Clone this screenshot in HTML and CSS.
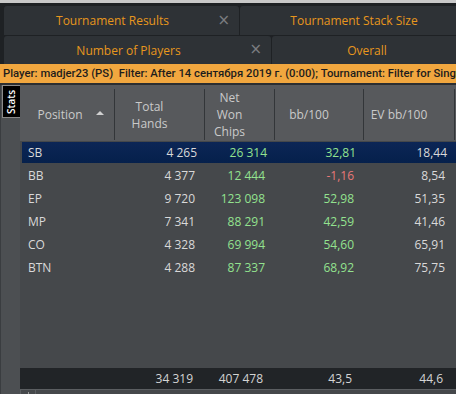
FILE: index.html
```html
<!DOCTYPE html>
<html>
<head>
<meta charset="utf-8">
<link rel="stylesheet" href="styles.css">
</head>
<body>
<div class="topstrip"></div>
<div class="tabbar">
  <div class="tabrow row-1">
    <div class="tab tab-a"><span class="tab-label">Tournament Results</span><span class="close">×</span></div>
    <div class="tab tab-b"><span class="tab-label">Tournament Stack Size</span></div>
  </div>
  <div class="tabrow row-2">
    <div class="tab tab-c"><span class="tab-label">Number of Players</span><span class="close">×</span></div>
    <div class="tab tab-d"><span class="tab-label">Overall</span></div>
  </div>
</div>
<div class="filterbar">Player: madjer23 (PS)&nbsp;&nbsp;Filter: After 14 сентября 2019 г. (0:00); Tournament: Filter for Singl</div>
<div class="main">
  <div class="side"><div class="stats"><span>Stats</span></div></div>
  <div class="table">
    <div class="head">
      <div class="hc hc-pos"><span>Position</span><span class="arrow"></span></div>
      <div class="hc">Total<br>Hands</div>
      <div class="hc">Net<br>Won<br>Chips</div>
      <div class="hc">bb/100</div>
      <div class="hc">EV bb/100</div>
      <div class="hc hc-last"></div>
    </div>
    <div class="body">
      <div class="row sel"><div class="c pos">SB</div><div class="c">4 265</div><div class="c g">26 314</div><div class="c g">32,81</div><div class="c">18,44</div><div></div></div>
      <div class="row"><div class="c pos">BB</div><div class="c">4 377</div><div class="c g">12 444</div><div class="c r">-1,16</div><div class="c">8,54</div><div></div></div>
      <div class="row"><div class="c pos">EP</div><div class="c">9 720</div><div class="c g">123 098</div><div class="c g">52,98</div><div class="c">51,35</div><div></div></div>
      <div class="row"><div class="c pos">MP</div><div class="c">7 341</div><div class="c g">88 291</div><div class="c g">42,59</div><div class="c">41,46</div><div></div></div>
      <div class="row"><div class="c pos">CO</div><div class="c">4 328</div><div class="c g">69 994</div><div class="c g">54,60</div><div class="c">65,91</div><div></div></div>
      <div class="row"><div class="c pos">BTN</div><div class="c">4 288</div><div class="c g">87 337</div><div class="c g">68,92</div><div class="c">75,75</div><div></div></div>
    </div>
    <div class="foot"><div class="f"></div><div class="f">34 319</div><div class="f">407 478</div><div class="f">43,5</div><div class="f">44,6</div><div></div></div>
    <div class="scroll"><div class="sbtn"><span class="plus"></span></div><div class="strack"></div></div>
  </div>
</div>
</body>
</html>
```
FILE: styles.css
```css
html, body {
  margin: 0;
  padding: 0;
}
body {
  width: 456px;
  height: 394px;
  overflow: hidden;
  background: #45484b;
  font-family: "Open Sans", "Noto Sans", sans-serif;
  font-size: 12px;
}
.topstrip {
  height: 3px;
  background: #c9c9c9;
}
.tabbar {
  background: #1e2124;
  padding: 3px 0 0 4px;
  display: flex;
  flex-direction: column;
  gap: 1px;
  overflow: hidden;
}
.tabrow {
  display: flex;
  gap: 1px;
}
.row-1 { height: 29px; }
.row-2 { height: 28px; }
.tab {
  background: #2e3236;
  border-radius: 3px 3px 0 0;
  display: flex;
  align-items: center;
  justify-content: center;
  color: #e8971d;
  font-size: 12px;
  position: relative;
  box-sizing: border-box;
  flex-shrink: 0;
}
.tab-a { width: 235px; padding-right: 18px; }
.tab-b { width: 228px; }
.tab-c { width: 267px; padding-right: 18px; }
.tab-d { width: 190px; }
.close {
  position: absolute;
  right: 9px;
  top: 5px;
  color: #7b7d80;
  font-size: 15px;
  font-family: "DejaVu Sans", sans-serif;
}
.row-2 .close { top: 4px; }
.filterbar {
  height: 19px;
  line-height: 19px;
  background: #f1a73f;
  color: #1d1d1d;
  font-family: "Roboto", "Liberation Sans", sans-serif;
  font-size: 11.3px;
  font-weight: 500;
  white-space: nowrap;
  overflow: hidden;
  padding-left: 3px;
  border-bottom: 2px solid #2b2e31;
}
.main {
  display: flex;
  height: 309px;
}
.side {
  width: 20px;
  flex-shrink: 0;
  background: #4c4f52;
  border-left: 1px solid #3a3d40;
  box-sizing: border-box;
}
.stats {
  margin-left: 1px;
  width: 18px;
  height: 33px;
  background: #000;
  border: 1px solid #8a8a8a;
  border-right: none;
  box-sizing: border-box;
  display: flex;
  align-items: center;
  justify-content: center;
}
.stats span {
  transform: rotate(-90deg);
  color: #fff;
  font-size: 10px;
  font-weight: 600;
  white-space: nowrap;
}
.table {
  flex: 1;
  display: flex;
  flex-direction: column;
}
.head, .row, .foot {
  display: grid;
  grid-template-columns: 95px 90px 70px 89px 91px 1fr;
}
.head {
  height: 56px;
  background: #57595c;
  color: #cacaca;
  line-height: 17px;
}
.hc {
  margin: 4px 0;
  border-right: 1px solid #333639;
  display: flex;
  align-items: center;
  justify-content: center;
  text-align: center;
  padding-right: 20px;
  position: relative;
}
.hc-pos {
  padding-right: 14px;
}
.hc-last {
  border-right: none;
  padding: 0;
}
.arrow {
  position: absolute;
  right: 10px;
  top: 22px;
  width: 0;
  height: 0;
  border-left: 4px solid transparent;
  border-right: 4px solid transparent;
  border-bottom: 4px solid #d0d0d0;
}
.body {
  flex: 1;
}
.row {
  height: 23px;
  color: #d9d9d9;
}
.row.sel {
  background: linear-gradient(#0c2656, #05204b);
  background-clip: content-box;
  padding: 1px 0;
  box-sizing: border-box;
  margin-left: 2px;
  margin-right: 1px;
}
.row.sel .pos { padding-left: 6px; }
.c {
  display: flex;
  align-items: center;
  justify-content: flex-end;
  padding-right: 10px;
}
.c.pos {
  justify-content: flex-start;
  padding-left: 8px;
}
.g { color: #93e28f; }
.r { color: #e87878; }
.foot {
  height: 21px;
  background: #212427;
  color: #d4d4d4;
}
.f {
  display: flex;
  align-items: center;
  justify-content: flex-end;
  padding-right: 12px;
}
.scroll {
  height: 5px;
  display: flex;
  background: #45484b;
}
.sbtn {
  width: 16px;
  border: 1px solid #5b5e61;
  border-bottom: none;
  display: flex;
  justify-content: center;
  padding-top: 2px;
  box-sizing: border-box;
}
.plus {
  width: 1px;
  height: 3px;
  background: #9a9a9a;
}
.strack {
  flex: 1;
  border-top: 1px solid #5b5e61;
}
```
